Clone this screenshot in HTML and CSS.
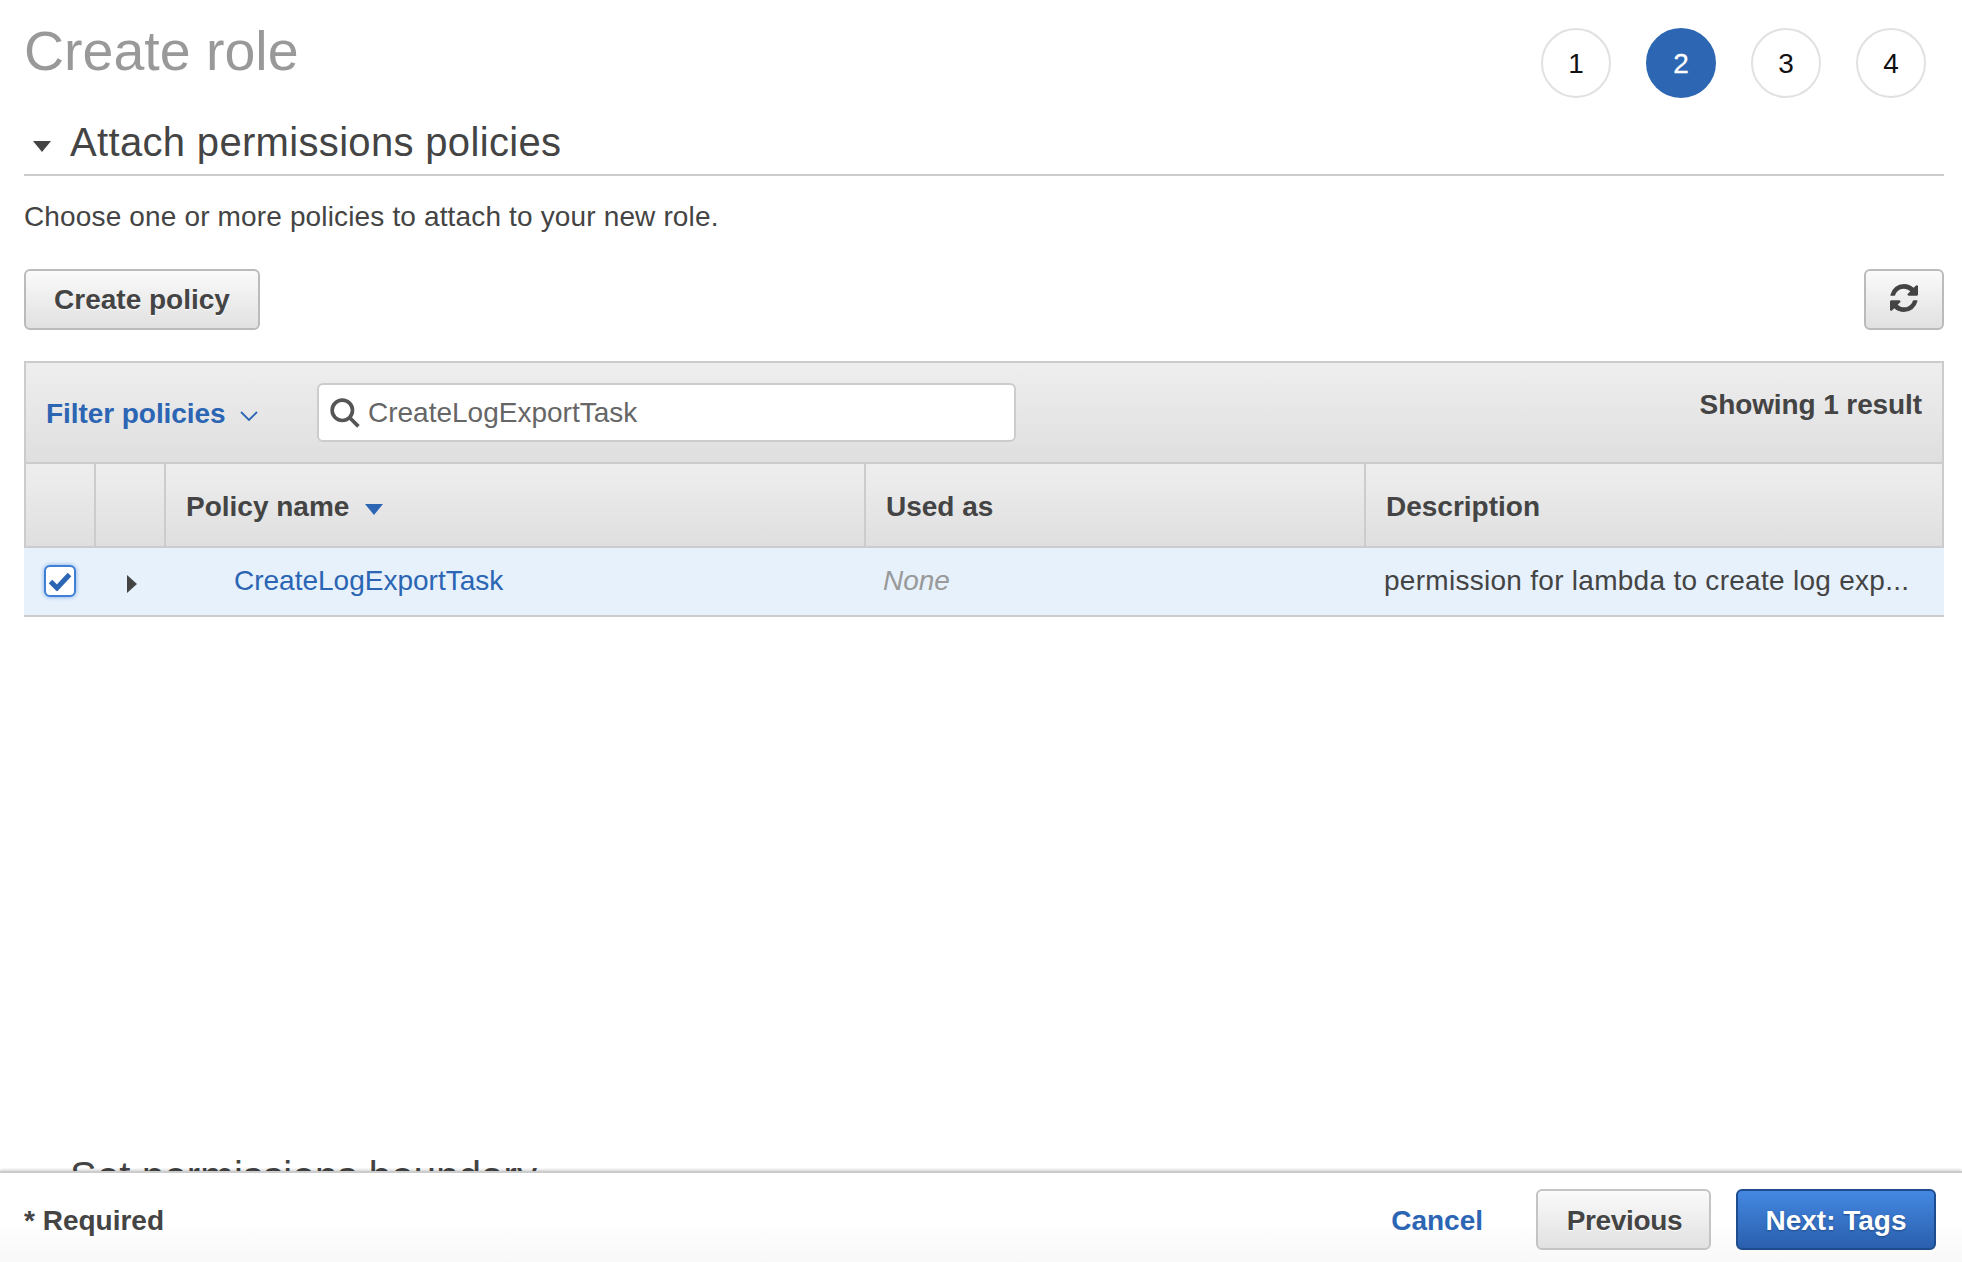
FILE: index.html
```html
<!DOCTYPE html>
<html lang="en">
<head>
<meta charset="utf-8">
<title>Create role</title>
<link rel="stylesheet" href="styles.css">
</head>
<body>
<main class="main">
  <header class="top">
    <h1 class="title">Create role</h1>
    <ol class="steps">
      <li class="step">1</li>
      <li class="step active">2</li>
      <li class="step">3</li>
      <li class="step">4</li>
    </ol>
  </header>
  <section class="section">
    <h2 class="section-head">
      <svg class="caret-down" viewBox="0 0 18 11"><path d="M0 0h18L9 11z"/></svg>
      <span>Attach permissions policies</span>
    </h2>
    <p class="desc">Choose one or more policies to attach to your new role.</p>
    <div class="actions">
      <button class="btn create">Create policy</button>
      <button class="btn refresh" aria-label="Refresh">
        <svg class="refresh-icon" viewBox="128 128 1536 1536"><path d="M1639 1056q0 5-1 7-64 268-268 434.5t-478 166.5q-146 0-282.5-55t-243.5-157l-129 129q-19 19-45 19t-45-19-19-45v-448q0-26 19-45t45-19h448q26 0 45 19t19 45-19 45l-137 137q71 66 161 102t187 36q134 0 250-65t186-179q11-17 53-117 8-23 30-23h192q13 0 22.5 9.5t9.5 22.5zm25-800v448q0 26-19 45t-45 19h-448q-26 0-45-19t-19-45 19-45l138-138q-148-137-349-137-134 0-250 65t-186 179q-11 17-53 117-8 23-30 23h-199q-13 0-22.5-9.5t-9.5-22.5v-7q65-268 270-434.5t480-166.5q146 0 284 55.5t245 156.5l130-129q19-19 45-19t45 19 19 45z"/></svg>
      </button>
    </div>
    <div class="table">
      <div class="filter-bar">
        <a class="filter-link">Filter policies
          <svg class="chevron" viewBox="0 0 18 10"><path d="M1 1l8 8 8-8"/></svg>
        </a>
        <div class="search">
          <svg class="search-icon" viewBox="0 0 28 28"><circle cx="11.500" cy="11.500" r="9.500"/><path d="M18 18l8.500 8.500"/></svg>
          <span>CreateLogExportTask</span>
        </div>
        <div class="count">Showing 1 result</div>
      </div>
      <div class="grid head">
        <div class="cell"></div>
        <div class="cell"></div>
        <div class="cell name-head">Policy name
          <svg class="sort" viewBox="0 0 18 11"><path d="M0 0h18L9 11z"/></svg>
        </div>
        <div class="cell">Used as</div>
        <div class="cell">Description</div>
      </div>
      <div class="grid row">
        <div class="cell"><span class="checkbox">
          <svg class="check" viewBox="0 0 24 20"><path d="M2.500 10.500l6.500 6.500L21.500 3.500"/></svg>
        </span></div>
        <div class="cell expand"><svg class="caret-right" viewBox="0 0 10 18"><path d="M0 0l10 9-10 9z"/></svg></div>
        <div class="cell policy-link"><a>CreateLogExportTask</a></div>
        <div class="cell none">None</div>
        <div class="cell description">permission for lambda to create log exp...</div>
      </div>
    </div>
  </section>
  <h2 class="section-head next-section">
    <svg class="caret-down" viewBox="0 0 18 11"><path d="M0 0h18L9 11z"/></svg>
    <span>Set permissions boundary</span>
  </h2>
</main>
<footer class="footer">
  <span class="required">* Required</span>
  <a class="cancel">Cancel</a>
  <button class="btn previous">Previous</button>
  <button class="btn primary">Next: Tags</button>
</footer>
</body>
</html>
```
FILE: styles.css
```css
* { box-sizing: border-box; }
html, body { margin: 0; height: 100%; }
body {
  width: 1962px;
  height: 1262px;
  overflow: hidden;
  display: flex;
  flex-direction: column;
  background: #fff;
  color: #444;
  font-family: "Liberation Sans", Arial, sans-serif;
  font-size: 28px;
}
.main {
  flex: 1;
  min-height: 0;
  overflow: hidden;
  padding: 0 18px 0 24px;
}
.top {
  display: flex;
  justify-content: space-between;
  align-items: flex-start;
  height: 118px;
}
.title {
  margin: 18px 0 0;
  font-size: 55.500px;
  line-height: 66px;
  font-weight: 400;
  color: #999;
}
.steps {
  display: flex;
  gap: 35px;
  list-style: none;
  margin: 28px 18px 0 0;
  padding: 0;
}
.step {
  width: 70px;
  height: 70px;
  padding-top: 2px;
  border: 2px solid #e1e1e1;
  border-radius: 50%;
  display: flex;
  align-items: center;
  justify-content: center;
  color: #111;
  font-size: 28px;
}
.step.active {
  background: #2d66b3;
  border-color: #2d66b3;
  color: #fff;
  -webkit-text-stroke: .3px #fff;
}
.section-head {
  display: flex;
  align-items: center;
  margin: 0;
  height: 58px;
  font-size: 40px;
  font-weight: 400;
  letter-spacing: .33px;
  color: #444;
}
.section > .section-head {
  border-bottom: 2px solid #ccc;
  padding-bottom: 7px;
}
.caret-down {
  width: 18px;
  height: 11px;
  margin: 8px 19px 0 9px;
  fill: #444;
  flex: none;
}
.desc {
  margin: 23px 0 0;
  line-height: 36px;
  letter-spacing: .15px;
}
.actions {
  display: flex;
  justify-content: space-between;
  margin-top: 34px;
}
.btn {
  height: 61px;
  border: 2px solid #bbb;
  border-radius: 6px;
  background: linear-gradient(#fafafa, #e1e1e1);
  color: #444;
  font: 700 28px "Liberation Sans", Arial, sans-serif;
  text-shadow: 0 1px 1px #fff;
  padding: 1px 0 0;
  display: flex;
  align-items: center;
  justify-content: center;
}
.create { width: 236px; }
.refresh { width: 80px; padding: 0 0 3px 0; }
.refresh-icon { width: 28px; height: 28px; fill: #444; }
.table { margin-top: 31px; }
.filter-bar {
  height: 103px;
  display: flex;
  align-items: flex-start;
  border: 2px solid #ccc;
  background: linear-gradient(#eee, #dfdfdf);
  padding-left: 20px;
}
.filter-link {
  display: flex;
  align-items: center;
  gap: 14px;
  width: 271px;
  margin-top: 33px;
  line-height: 36px;
  color: #2b65b3;
  font-weight: 700;
  letter-spacing: -.06px;
}
.chevron {
  width: 18px;
  height: 10px;
  margin-top: 3px;
  fill: none;
  stroke: #2b65b3;
  stroke-width: 1.8;
}
.search {
  width: 699px;
  height: 59px;
  margin-top: 20px;
  padding-left: 11px;
  display: flex;
  align-items: center;
  gap: 8px;
  background: #fff;
  border: 2px solid #ccc;
  border-radius: 6px;
  color: #666;
}
.search-icon {
  width: 30px;
  height: 30px;
  fill: none;
  stroke: #555;
  stroke-width: 3.400;
  flex: none;
}
.count {
  margin-left: auto;
  margin-top: 24px;
  padding-right: 20px;
  line-height: 36px;
  font-weight: 700;
  letter-spacing: -.1px;
}
.grid {
  display: grid;
  grid-template-columns: 70px 70px 700px 500px 580px;
}
.cell {
  display: flex;
  align-items: center;
  min-width: 0;
}
.head {
  height: 84px;
  border-bottom: 2px solid #ccc;
  border-right: 2px solid #ccc;
  font-weight: 700;
  background: linear-gradient(#eee, #dfdfdf);
}
.head .cell {
  border-left: 2px solid #ccc;
  padding-left: 20px;
  padding-top: 4px;
}
.sort {
  width: 18px;
  height: 11px;
  margin: 4px 0 0 16px;
  fill: #2b65b3;
}
.row {
  height: 69px;
  background: #e6f1fc;
  border-bottom: 2px solid #ccc;
}
.row .cell { padding-bottom: 2px; }
.checkbox {
  width: 32px;
  height: 32px;
  margin-left: 20px;
  background: #fff;
  border: 2px solid #3f7fd6;
  border-radius: 6px;
  box-shadow: 0 0 4px #7aa7e3;
  display: flex;
  align-items: center;
  justify-content: center;
}
.check {
  width: 24px;
  height: 20px;
  fill: none;
  stroke: #2b65b3;
  stroke-width: 5;
}
.row .expand { padding: 0 0 0 33px; }
.caret-right { width: 10px; height: 18px; fill: #444; margin-top: 5px; }
.policy-link { padding-left: 70px; color: #2b65b3; }
.none { padding-left: 19px; font-style: italic; color: #999; }
.description { padding-left: 20px; white-space: nowrap; letter-spacing: .28px; }
.next-section { margin-top: 530px; letter-spacing: .2px; }
.footer {
  flex: none;
  height: 91px;
  display: flex;
  align-items: center;
  padding: 4px 26px 0 24px;
  border-top: 2px solid #ccc;
  background: linear-gradient(#fff 55%, #f8f8f8);
  box-shadow: 0 -1px 3px rgba(0, 0, 0, .2);
  position: relative;
}
.required { font-weight: 700; margin: 2px auto 0 0; }
.cancel { font-weight: 700; color: #2b65b3; margin: 2px 53px 0 1px; }
.previous { width: 175px; border-color: #c4c4c4; letter-spacing: -.35px; padding: 2px 0 0 2px; }
.primary {
  width: 200px;
  margin-left: 25px;
  border-color: #1e4d8f;
  background: linear-gradient(#4488e2, #2a5fad);
  color: #fff;
  padding: 2px 0 0;
  text-shadow: 0 1px 2px #1d4a88;
}
```
